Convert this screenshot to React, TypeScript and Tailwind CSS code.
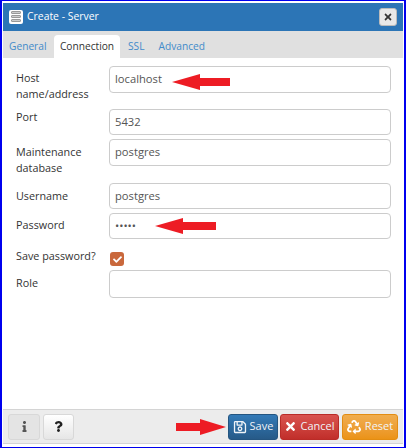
import React from "react";
import { FaRegSave, FaTimes, FaRecycle, FaCheck, FaInfo, FaQuestion } from "react-icons/fa";

const font = { fontFamily: '"Open Sans", "Noto Sans", sans-serif' };

function Arrow({ className, width, flip }: { className: string; width: number; flip?: boolean }) {
  const w = width;
  return (
    <svg className={`absolute ${className}`} width={w} height="16" viewBox={`0 0 ${w} 16`}>
      {flip ? (
        <polygon points={`0,4 ${w - 26},4 ${w - 26},0 ${w},8 ${w - 26},16 ${w - 26},12 0,12`} fill="#ed1c24" />
      ) : (
        <polygon points={`0,8 28,0 28,4 ${w},4 ${w},12 28,12 28,16`} fill="#ed1c24" />
      )}
    </svg>
  );
}

function Row({ label, value, h, rowH, mb, pt }: { label: React.ReactNode; value?: string; h: string; rowH: string; mb: string; pt: string }) {
  return (
    <div className={`flex items-start ${rowH} ${mb}`}>
      <div className={`w-[94px] shrink-0 pl-[1px] ${pt} text-[10.8px] leading-[16px] text-[#333]`}>{label}</div>
      <div className={`w-[282px] ${h} flex items-center rounded-[4px] border border-[#cccccc] bg-white pl-[5px] text-[11.2px] text-[#555]`}>
        {value}
      </div>
    </div>
  );
}

export default function App() {
  return (
    <div style={font} className="relative flex h-[448px] w-[406px] flex-col border-x-[2px] border-y-[1px] border-[#0000ee] bg-white pb-[3px] pl-[1px] pr-[1px] pt-[2px]">
      <div className="flex h-[28px] shrink-0 items-center justify-between bg-[#2c75b6] pl-[6px] pr-[6px]">
        <div className="flex items-center gap-[4px] text-[10.4px] text-white">
          <span className="flex h-[14px] w-[14px] flex-col items-center justify-center gap-[1px] rounded-[2px] bg-white">
            <span className="h-[3px] w-[10px] rounded-[1px] border border-[#999] bg-[#ccc]" />
            <span className="h-[3px] w-[10px] rounded-[1px] border border-[#999] bg-[#ccc]" />
            <span className="h-[3px] w-[10px] rounded-[1px] border border-[#999] bg-[#ccc]" />
          </span>
          <span>Create - Server</span>
        </div>
        <button className="flex h-[18px] w-[18px] items-center justify-center rounded-[3px] border border-[#bbb] bg-[#e8e8e8]">
          <FaTimes size={10} className="text-[#333]" />
        </button>
      </div>

      <div className="flex h-[27px] shrink-0 items-end bg-[#e0e0e0] text-[10.2px] leading-[23px] text-[#428bca]">
        <span className="h-[23px] w-[51px] pl-[6px]">General</span>
        <span className="h-[23px] w-[66px] rounded-t-[4px] bg-white text-center text-[#333]">Connection</span>
        <span className="ml-[8px] h-[23px]">SSL</span>
        <span className="ml-[14px] h-[23px]">Advanced</span>
      </div>

      <div className="flex min-h-0 flex-1 flex-col bg-white pl-[12px] pt-[8px]">
        <Row label={<>Host<br />name/address</>} value="localhost" h="h-[27px]" rowH="h-[36px]" mb="mb-[7px]" pt="pt-[4px]" />
        <Row label="Port" value="5432" h="h-[26px]" rowH="h-[26px]" mb="mb-[4px]" pt="pt-0" />
        <Row label={<>Maintenance<br />database</>} value="postgres" h="h-[27px]" rowH="h-[36px]" mb="mb-[8px]" pt="pt-[5px]" />
        <Row label="Username" value="postgres" h="h-[26px]" rowH="h-[26px]" mb="mb-[4px]" pt="pt-[5px]" />
        <Row label="Password" value="•••••" h="h-[26px]" rowH="h-[26px]" mb="mb-[13px]" pt="pt-[4px]" />
        <div className="mb-[4px] flex h-[14px]">
          <div className="-mt-[4px] w-[94px] pl-[1px] text-[10.8px] leading-[16px] text-[#333]">Save password?</div>
          <span className="ml-[1px] flex h-[14px] w-[14px] items-center justify-center rounded-[3px] bg-[#c9683c]">
            <FaCheck size={9} className="text-white" />
          </span>
        </div>
        <Row label="Role" h="h-[28px]" rowH="h-[28px]" mb="mb-0" pt="pt-[5px]" />
      </div>

      <div className="flex h-[35px] shrink-0 items-center justify-between border-y border-[#d4d4d4] bg-[#ececec] pl-[5px] pr-[5px]">
        <div className="flex gap-[3px]">
          <button className="flex h-[26px] w-[32px] items-center justify-center rounded-[3px] border border-[#d8d8d8] bg-[#e4e4e4] text-[#555]">
            <FaInfo size={11} />
          </button>
          <button className="flex h-[26px] w-[31px] items-center justify-center rounded-[3px] border border-[#d8d8d8] bg-linear-to-b from-[#ffffff] to-[#e6e6e6] text-[#222]">
            <FaQuestion size={11} />
          </button>
        </div>
        <div className="flex text-[11px] text-[#f0f4f8]">
          <button className="flex h-[26px] w-[50px] items-center justify-center gap-[3px] rounded-[3px] border border-[#245580] bg-linear-to-b from-[#337ab7] to-[#265a88]">
            <FaRegSave size={14} />Save
          </button>
          <button className="ml-[2px] flex h-[26px] w-[59px] items-center justify-center gap-[3px] rounded-[3px] border border-[#b92c28] bg-linear-to-b from-[#d9534f] to-[#c12e2a]">
            <FaTimes size={13} className="text-white" />Cancel
          </button>
          <button className="ml-[3px] flex h-[26px] w-[56px] items-center justify-center gap-[4px] rounded-[3px] border border-[#e38d13] bg-linear-to-b from-[#f0ad4e] to-[#eb9316]">
            <FaRecycle size={14} className="text-white" />Reset
          </button>
        </div>
      </div>

      <Arrow className="left-[170px] top-[73px]" width={58} />
      <Arrow className="left-[153px] top-[217px]" width={61} />
      <Arrow className="left-[174px] top-[418px]" width={50} flip />
    </div>
  );
}
